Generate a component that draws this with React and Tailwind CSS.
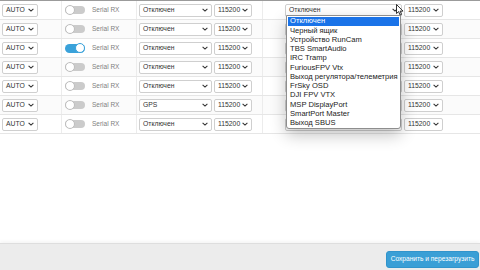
import React from "react";

const Chevron = () => (
  <svg width="6" height="4" viewBox="0 0 6 4" className="shrink-0">
    <path d="M0.6 0.8 L3 3.1 L5.4 0.8" fill="none" stroke="#333" strokeWidth="1.1" />
  </svg>
);

const Sel = ({ text, w }) => (
  <div
    className={`${w} h-[13px] flex items-center justify-between pl-[3px] pr-[3px] bg-white border border-[#cfcfcf] rounded-[2px] text-[6.8px] text-[#333] leading-none whitespace-nowrap`}
  >
    <span>{text}</span>
    <Chevron />
  </div>
);

const Toggle = ({ on }) =>
  on ? (
    <div className="relative w-[20px] h-[9px] rounded-full bg-[#3aa2da]">
      <div className="absolute right-0 top-[-0.5px] w-[10px] h-[10px] rounded-full bg-white border border-[#3aa2da]" />
    </div>
  ) : (
    <div className="relative w-[20px] h-[8px] rounded-full bg-[#cbcbcb]">
      <div className="absolute left-0 top-[-1px] w-[10px] h-[10px] rounded-full bg-white border border-[#bdbdbd]" />
    </div>
  );

const rows = [
  { on: false, f: "Отключен" },
  { on: false, f: "Отключен" },
  { on: true, f: "Отключен" },
  { on: false, f: "Отключен" },
  { on: false, f: "Отключен" },
  { on: false, f: "GPS" },
  { on: false, f: "Отключен" },
];

const options = [
  "Отключен",
  "Черный ящик",
  "Устройство RunCam",
  "TBS SmartAudio",
  "IRC Tramp",
  "FuriousFPV Vtx",
  "Выход регулятора/телеметрия",
  "FrSky OSD",
  "DJI FPV VTX",
  "MSP DisplayPort",
  "SmartPort Master",
  "Выход SBUS",
];

export default function App() {
  return (
    <div className="relative w-[480px] h-[270px] overflow-hidden bg-white flex flex-col font-['Liberation_Sans',Arial,sans-serif]">
      <div className="flex-1 border-t border-[#9b9b9b]">
        {rows.map((r, i) => (
          <div
            key={i}
            className={`h-[19px] flex border-b border-[#e6e6e6] ${i % 2 === 1 ? "bg-[#fbfbfb]" : "bg-white"}`}
          >
            <div className="w-[62px] flex items-center pl-[2px] border-r border-[#ececec]">
              <Sel text="AUTO" w="w-[36px]" />
            </div>
            <div className="w-[75px] flex items-center pl-[3px] gap-[7px] border-r border-[#ececec]">
              <Toggle on={r.on} />
              <span className="text-[6.5px] text-[#808080] whitespace-nowrap">Serial RX</span>
            </div>
            <div className="w-[126px] flex items-center pl-[2px] gap-[2px] border-r border-[#ececec]">
              <Sel text={r.f} w="w-[73px]" />
              <Sel text="115200" w="w-[38px]" />
            </div>
            <div className="flex-1 flex items-center pl-[22px] gap-[2px]">
              <Sel text={i === 0 ? "Отключен" : ""} w="w-[117px]" />
              <Sel text="115200" w="w-[39px]" />
            </div>
          </div>
        ))}
      </div>
      <div className="h-[27px] shrink-0 bg-[#ececec] border-t border-[#dedede] shadow-[0_-2px_3px_rgba(0,0,0,0.04)] flex items-end justify-end pr-[1px] pb-[2px]">
        <button className="h-[17px] w-[93px] rounded-[3px] bg-[#3a9fd6] border border-[#3194cb] text-white text-[6.6px] leading-none whitespace-nowrap">
          Сохранить и перезагрузить
        </button>
      </div>

      <div className="absolute left-[286px] top-[15px] w-[115px] h-[114px] bg-white border border-[#8e8e8e] rounded-b-[3px] shadow-[0_6px_16px_rgba(0,0,0,0.24)] flex flex-col py-[0.5px]">
        {options.map((o, i) => (
          <div
            key={o}
            className={`flex-1 min-h-0 overflow-hidden flex items-center px-[2px] mx-[1px] text-[7.6px] leading-none whitespace-nowrap ${i === 0 ? "bg-[#1a73e8] text-white" : "text-[#222]"}`}
          >
            {o}
          </div>
        ))}
      </div>

      <svg className="absolute left-[396px] top-[4px]" width="8" height="12" viewBox="0 0 8 12">
        <path d="M0.5 0.5 L0.5 9.5 L2.6 7.6 L4.1 11 L5.5 10.4 L4.1 7.1 L7 7.1 Z" fill="white" stroke="black" strokeWidth="0.8" strokeLinejoin="round" />
      </svg>
    </div>
  );
}
